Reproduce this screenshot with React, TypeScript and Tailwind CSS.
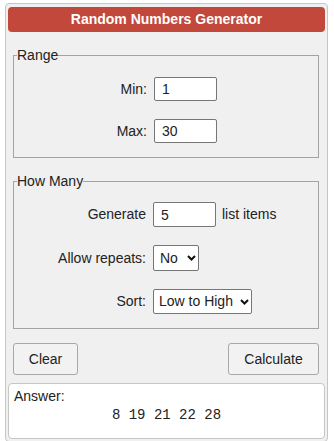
import React from "react";

const font = { fontFamily: '"Liberation Sans", Arial, sans-serif' };

function Chevron() {
  return (
    <svg
      className="pointer-events-none absolute right-[3px] top-1/2 -translate-y-1/2"
      width="9"
      height="6"
      viewBox="0 0 9 6"
    >
      <path d="M1 1 L4.5 4.5 L8 1" fill="none" stroke="#111" strokeWidth="2" />
    </svg>
  );
}

export default function App() {
  return (
    <div
      className="w-[334px] h-[441px] bg-white text-[14px] text-[#222] overflow-hidden"
      style={font}
    >
      <div className="ml-[5px] mt-[3px] w-[323px] rounded-[4px] border border-[#c6c6c6] bg-[#f0f0f0] px-[2px] pt-[3px] pb-[2px]">
        <div className="h-[25px] rounded-[4px] bg-[#c1483a] text-center text-[14px] font-bold leading-[25px] text-white">
          Random Numbers Generator
        </div>

        <fieldset className="ml-[5px] mt-[15px] w-[306px] border border-[#a3a3a3] pl-[3px] pb-[14px]">
          <legend className="leading-[16px]">Range</legend>
          <div className="mt-[14px] flex items-center">
            <div className="w-[130px] text-right">Min:</div>
            <input
              className="ml-[7px] h-[24px] w-[63px] rounded-[2px] border border-[#767676] bg-white px-[7px] text-[14px]"
              defaultValue="1"
            />
          </div>
          <div className="mt-[18px] flex items-center">
            <div className="w-[130px] text-right">Max:</div>
            <input
              className="ml-[7px] h-[24px] w-[63px] rounded-[2px] border border-[#767676] bg-white px-[7px] text-[14px]"
              defaultValue="30"
            />
          </div>
        </fieldset>

        <fieldset className="ml-[5px] mt-[15px] w-[306px] border border-[#a3a3a3] pl-[3px] pb-[14px]">
          <legend className="leading-[16px]">How Many</legend>
          <div className="mt-[13px] flex items-center">
            <div className="w-[129px] text-right">Generate</div>
            <input
              className="ml-[7px] h-[25px] w-[63px] rounded-[2px] border border-[#767676] bg-white px-[7px] text-[14px]"
              defaultValue="5"
            />
            <span className="ml-[6px]">list items</span>
          </div>
          <div className="mt-[18px] flex items-center">
            <div className="w-[129px] text-right">Allow repeats:</div>
            <div className="relative ml-[7px]">
              <select
                className="h-[26px] w-[46px] appearance-none rounded-[2px] border border-[#767676] bg-white pl-[6px] text-[14px]"
                defaultValue="No"
              >
                <option>No</option>
                <option>Yes</option>
              </select>
              <Chevron />
            </div>
          </div>
          <div className="mt-[18px] flex items-center">
            <div className="w-[129px] text-right">Sort:</div>
            <div className="relative ml-[7px]">
              <select
                className="h-[25px] w-[99px] appearance-none rounded-[2px] border border-[#767676] bg-white pl-[5px] text-[14px]"
                defaultValue="Low to High"
              >
                <option>Low to High</option>
                <option>High to Low</option>
                <option>None</option>
              </select>
              <Chevron />
            </div>
          </div>
        </fieldset>

        <div className="mt-[14px] flex justify-between pl-[5px] pr-[6px]">
          <button className="h-[32px] w-[65px] rounded-[3px] border border-[#a8a8a8] bg-[#f2f2f2] text-[14px]">
            Clear
          </button>
          <button className="h-[32px] w-[91px] rounded-[3px] border border-[#a8a8a8] bg-[#f2f2f2] text-[14px]">
            Calculate
          </button>
        </div>

        <div className="mt-[8px] h-[56px] rounded-[4px] border border-[#c6c6c6] bg-white px-[5px] pt-[4px]">
          <div className="leading-[16px]">Answer:</div>
          <div
            className="mt-[3px] text-center text-[14px] leading-[16px]"
            style={{ fontFamily: '"Liberation Mono", "Courier New", monospace' }}
          >
            8 19 21 22 28
          </div>
        </div>
      </div>
    </div>
  );
}
